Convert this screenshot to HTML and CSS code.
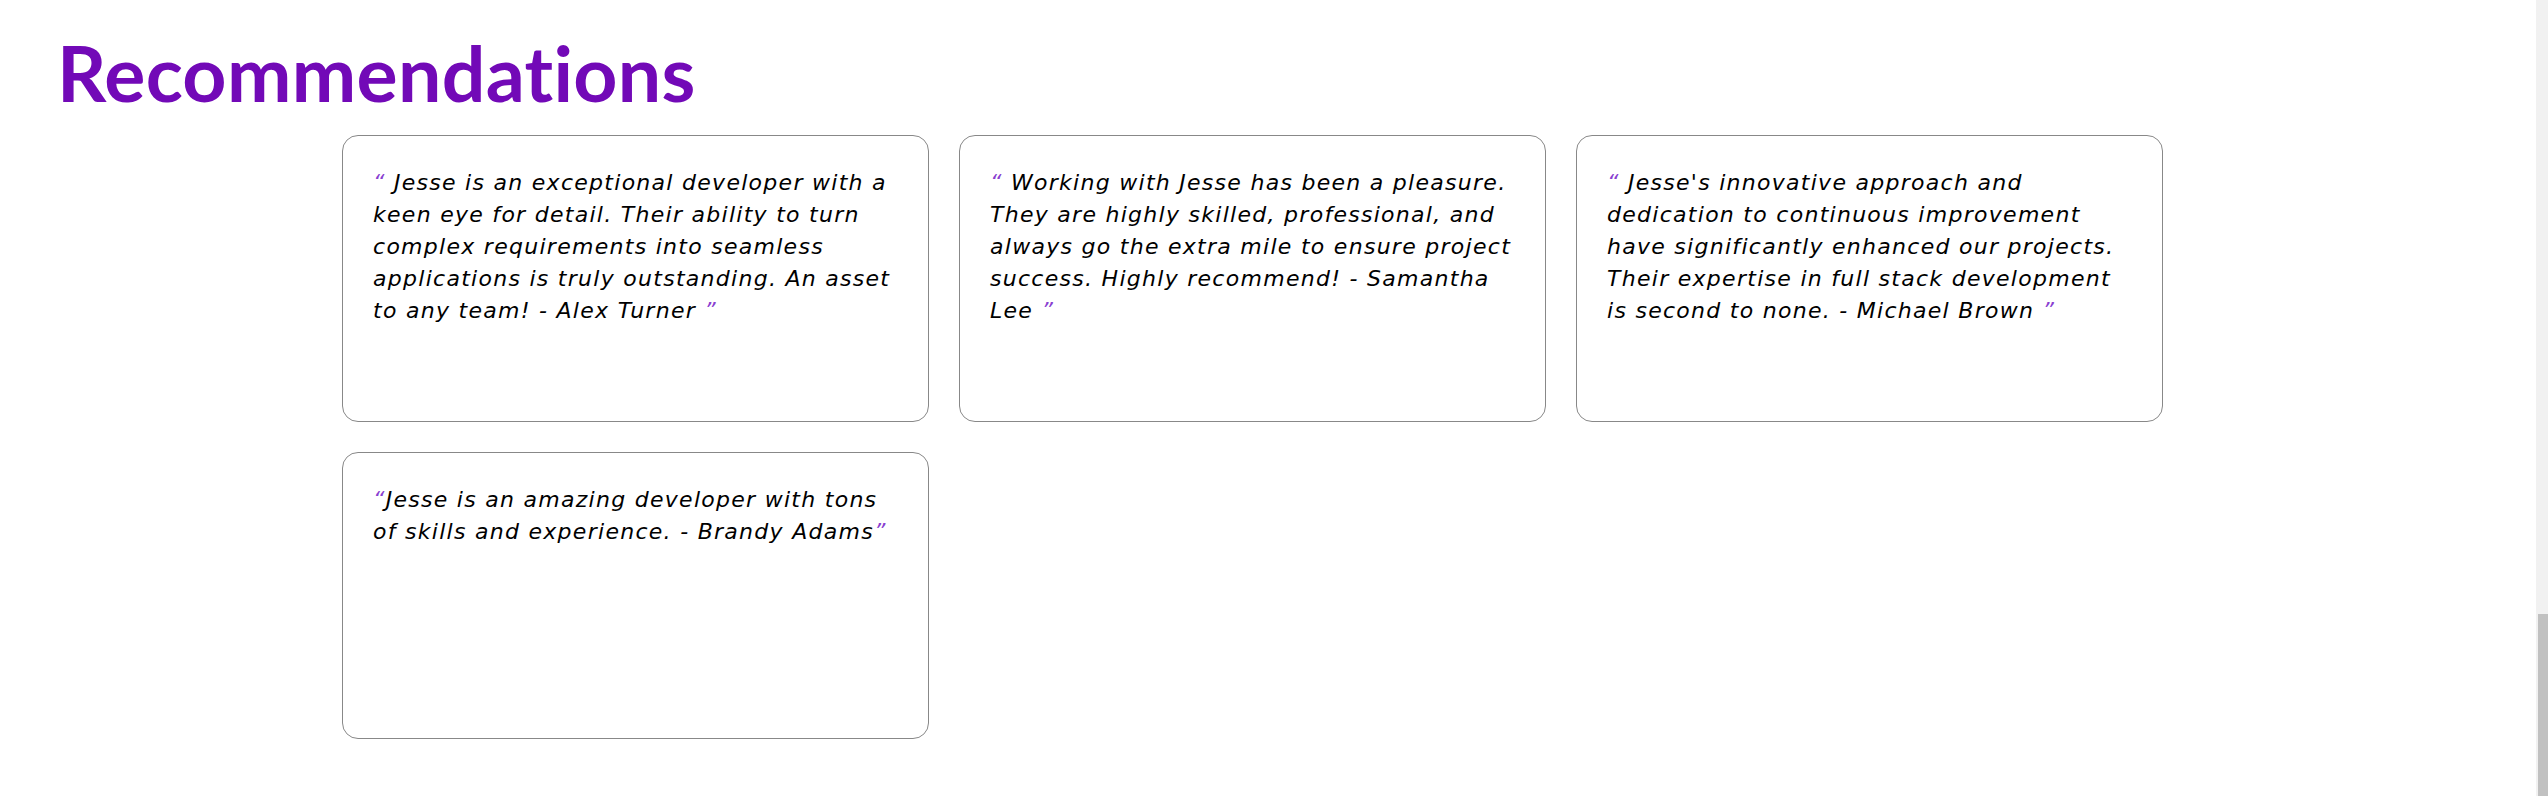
FILE: index.html
```html
<!DOCTYPE html>
<html lang="en">
<head>
  <meta charset="UTF-8">
  <title>Recommendations</title>
  <link rel="stylesheet" href="styles.css">
</head>
<body>
  <section class="recommendations">
    <h1>Recommendations</h1>

    <div class="rec-grid">
      <div class="rec-card">
        <p><span class="quote">&ldquo;</span> Jesse is an exceptional developer with a keen eye for detail. Their ability to turn complex requirements into seamless applications is truly outstanding. An asset to any team! - Alex Turner <span class="quote">&rdquo;</span></p>
      </div>
      <div class="rec-card">
        <p><span class="quote">&ldquo;</span> Working with Jesse has been a pleasure. They are highly skilled, professional, and always go the extra mile to ensure project success. Highly recommend! - Samantha Lee <span class="quote">&rdquo;</span></p>
      </div>
      <div class="rec-card">
        <p><span class="quote">&ldquo;</span> Jesse's innovative approach and dedication to continuous improvement have significantly enhanced our projects. Their expertise in full stack development is second to none. - Michael Brown <span class="quote">&rdquo;</span></p>
      </div>
      <div class="rec-card">
        <p><span class="quote">&ldquo;</span>Jesse is an amazing developer with tons of skills and experience. - Brandy Adams<span class="quote">&rdquo;</span></p>
      </div>
    </div>
  </section>

  <div class="fake-scrollbar" aria-hidden="true"><div class="thumb"></div></div>
</body>
</html>
```

FILE: styles.css
```css
body {
  margin: 0;
  background: #fff;
  font-family: "DejaVu Sans", Arial, sans-serif;
}
.recommendations {
  padding: 34px 0 40px 57px;
}
h1 {
  margin: 0 0 24px;
  font-family: Lato, "Open Sans", sans-serif;
  font-weight: 700;
  font-size: 77px;
  line-height: 1;
  letter-spacing: 0.3px;
  color: #7209b7;
}
.rec-grid {
  display: grid;
  grid-template-columns: repeat(3, 587px);
  gap: 30px;
  margin-left: 285px;
}
.rec-card {
  box-sizing: border-box;
  height: 287px;
  padding: 31px 30px;
  border: 1px solid #888;
  border-radius: 16px;
  background: #fff;
}
.rec-card p {
  margin: 0;
  font-size: 22px;
  line-height: 32px;
  letter-spacing: 1.28px;
  font-style: italic;
  color: #000;
}
.quote {
  color: #8a3fd1;
  font-weight: 300;
}
.fake-scrollbar {
  position: fixed;
  top: 0;
  right: 0;
  width: 12px;
  height: 100%;
  background: #f1f1f1;
}
.fake-scrollbar .thumb {
  position: absolute;
  bottom: 0;
  right: 0;
  width: 10px;
  height: 182px;
  background: #c1c1c1;
}
```
